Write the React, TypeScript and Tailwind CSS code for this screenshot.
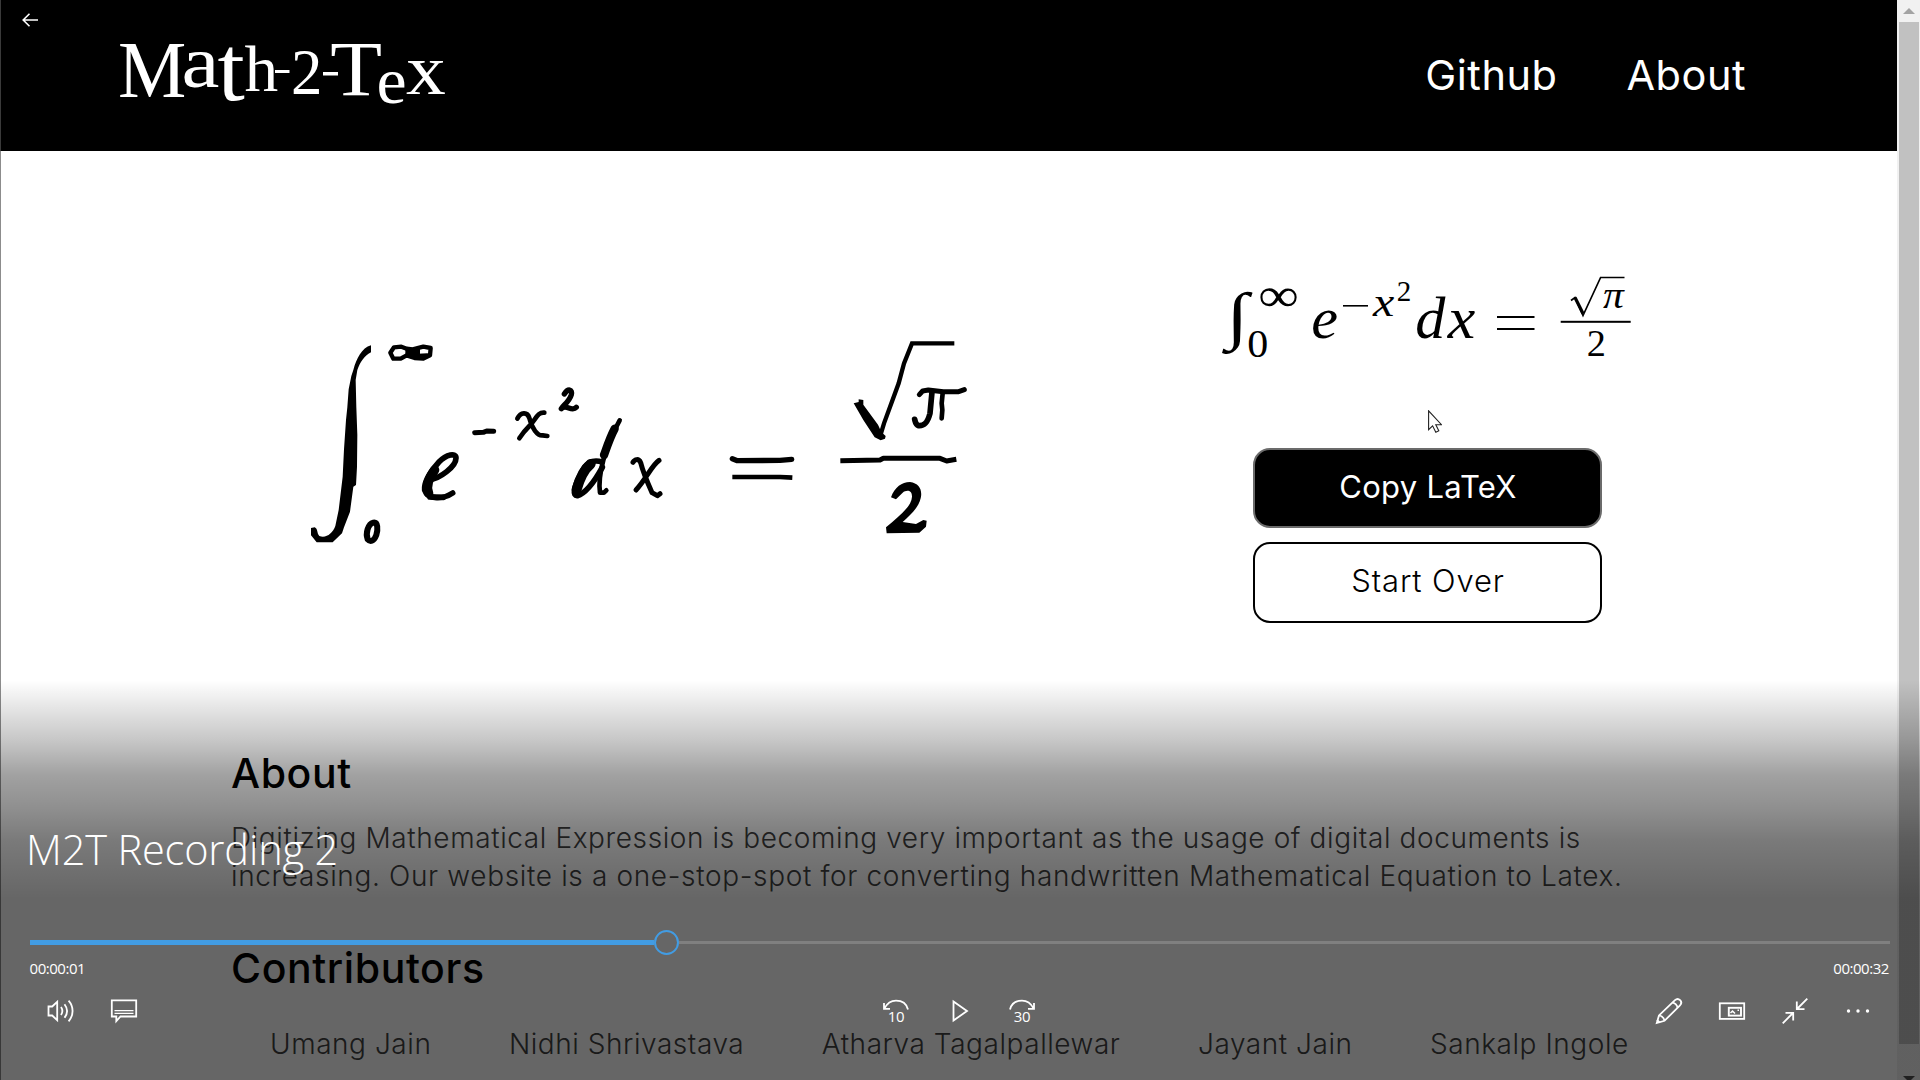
import React from "react";

type Metrics = { l: number; r: number; a: number; d: number; italic?: boolean };

// Ink boxes of Liberation Serif glyphs, in hundredths of an em.
const INK: Record<string, Metrics> = {
  M: { l: 2, r: 86, a: 65, d: 0 },
  a: { l: 3, r: 44, a: 47, d: 1 },
  t: { l: 0, r: 28, a: 57, d: 1 },
  h: { l: 0, r: 49, a: 68, d: 0 },
  "2": { l: 3, r: 46, a: 67, d: 0 },
  T: { l: 1, r: 60, a: 65, d: 0 },
  e: { l: 3, r: 42, a: 46, d: 1 },
  x: { l: 0, r: 49, a: 46, d: 0 },
  "0": { l: 3, r: 47, a: 67, d: 1 },
  "∞": { l: 3, r: 68, a: 48, d: -9 },
  "∫": { l: -6, r: 33, a: 72, d: 27 },
  "e*": { l: 3, r: 42, a: 46, d: 1, italic: true },
  "x*": { l: -2, r: 44, a: 45, d: 1, italic: true },
  "d*": { l: 2, r: 51, a: 68, d: 1, italic: true },
  "π*": { l: 0, r: 53, a: 45, d: 1, italic: true },
};

// Places one character so that its ink fills the given box.
function Glyph({ c, x0, x1, y0, y1 }: { c: string; x0: number; x1: number; y0: number; y1: number }) {
  const m = INK[c];
  const sx = (x1 - x0) / (m.r - m.l);
  const sy = (y1 - y0) / (m.a + m.d);
  return (
    <text
      fontSize="100"
      fontStyle={m.italic ? "italic" : "normal"}
      transform={`translate(${x0 - m.l * sx} ${y0 + m.a * sy}) scale(${sx} ${sy})`}
    >
      {c[0]}
    </text>
  );
}

function Logo() {
  return (
    <svg viewBox="119 36 328 76" className="h-[76px] w-[328px] overflow-visible fill-white font-['Liberation_Serif',serif]">
      <Glyph c="M" x0={119.5} x1={184} y0={45} y1={97} />
      <Glyph c="a" x0={184} x1={219} y0={53} y1={88} />
      <Glyph c="t" x0={217.5} x1={245} y0={47} y1={101} />
      <Glyph c="h" x0={244.5} x1={277.5} y0={46} y1={91} />
      <rect x="275" y="70" width="14.5" height="3" />
      <Glyph c="2" x0={293} x1={320} y0={50} y1={94} />
      <rect x="323" y="72" width="15" height="3.5" />
      <Glyph c="T" x0={331} x1={381} y0={43.5} y1={95} />
      <Glyph c="e" x0={378.5} x1={405} y0={73} y1={104} />
      <Glyph c="x" x0={406} x1={445} y0={61} y1={94} />
    </svg>
  );
}

function Handwriting() {
  return (
    <svg
      viewBox="0 0 2130 720"
      className="h-[240px] w-[710px]"
      fill="none"
      stroke="#000"
      strokeWidth="17"
      strokeLinecap="round"
      strokeLinejoin="round"
    >
      <path
        fill="#000"
        stroke="none"
        d="M243 76 C215 84 200 115 190 150 L184 168 L176 208 L172 262 L168 300 L162 388 L158 470 L146 570 L136 618 C128 640 108 656 88 648 C80 640 84 626 74 622 L63 624 L63 646 L80 667 L128 667 L156 640 L162 622 L180 575 L190 500 L198 495 L201 440 L202 345 L199 262 L197 180 L202 150 C210 128 222 108 243 97 Z"
      />
      <path strokeWidth="13" d="M334 80 L312 82 L301 98 L310 116 L332 116 L350 106 L374 114 L400 116 L420 106 L422 84 L400 80 L368 88 L350 86 Z" />
      <path strokeWidth="26" strokeLinecap="butt" d="M346 98 L390 98" />
      <path strokeWidth="12" d="M370 108 L412 106" />
      <path strokeWidth="18" d="M250 608 C264 606 264 628 259 645 C251 666 240 666 233 658 C226 640 234 612 250 608 Z" />
      <path d="M418 480 C450 475 498 440 498 414 C498 398 470 402 446 427 C415 462 402 490 404 510 C414 540 460 538 488 519" />
      <path strokeWidth="28" d="M434 450 C412 480 408 500 416 520" />
      <path strokeWidth="17" d="M420 531 L460 532" />
      <path strokeWidth="15" d="M554 338 L580 337 L590 333 L611 334" />
      <path strokeWidth="14" d="M682 296 C692 276 712 274 718 294 C726 325 742 348 758 346 L772 348 M763 278 C742 276 738 298 718 318 C702 334 695 344 688 355" />
      <path strokeWidth="16" d="M823 222 C834 204 848 208 844 224 C838 244 820 256 814 266 C828 250 845 278 859 262" />
      <path strokeWidth="14" d="M989 301 C970 335 950 385 940 420 C932 450 925 485 930 518 L942 518 L949 511" />
      <path strokeWidth="25" d="M974 326 C960 352 951 380 942 405" />
      <path d="M936 426 C905 416 887 430 870 467 C850 505 848 528 862 527 C890 519 916 480 937 442" />
      <path strokeWidth="30" d="M902 432 C882 448 868 480 860 508" />
      <path strokeWidth="15" d="M1029 427 C1034 418 1046 414 1052 428 C1060 460 1078 500 1086 518 L1102 527 L1110 521 M1107 421 C1085 436 1070 475 1038 510" />
      <g transform="translate(1170 0)">
        <path strokeWidth="16" d="M157 416 L172 422 L300 421 L335 418" />
        <path strokeWidth="14" strokeLinecap="butt" d="M157 471 L300 471 L337 473" />
        <path fill="#000" stroke="none" d="M521 250 L536 246 L536 238 L550 240 L550 254 L594 314 L604 336 L617 348 L615 356 L602 361 L584 352 L550 300 Z" />
        <path strokeWidth="13" strokeLinejoin="miter" strokeLinecap="butt" d="M600 350 L612 310 L656 190 L672 130 L696 70 L823 70" />
        <path d="M718 224 L728 213 L745 210 L790 215 L836 215 L853 209" strokeWidth="15" />
        <path d="M756 216 L750 280 C742 312 730 318 716 317 C706 314 706 305 704 298" />
        <path strokeWidth="14" d="M788 220 L785 250 L787 270 L785 295" />
        <path strokeWidth="15" strokeLinecap="butt" d="M481 422 L600 420 L610 415 L780 415 L800 423 L829 418" />
        <path fill="#000" stroke="none" d="M633 532 C645 500 665 487 690 486 C718 490 728 510 722 535 C715 565 690 585 668 606 L708 612 L730 600 L740 602 L738 620 L718 638 L620 640 L618 622 C655 590 695 560 696 530 C696 508 678 510 668 518 L648 538 Z" />
      </g>
    </svg>
  );
}

function Formula() {
  return (
    <svg viewBox="1217 273 418 90" className="h-[90px] w-[418px] overflow-visible font-['Liberation_Serif',serif]">
      <Glyph c="∫" x0={1221.5} x1={1253} y0={291} y1={354} />
      <Glyph c="∞" x0={1260} x1={1297} y0={288} y1={306.5} />
      <Glyph c="0" x0={1248.5} x1={1267} y0={330} y1={357} />
      <Glyph c="e*" x0={1313} x1={1336.5} y0={311} y1={338.5} />
      <rect x="1343" y="305" width="25" height="1.6" />
      <Glyph c="x*" x0={1372} x1={1394} y0={297} y1={316.5} />
      <Glyph c="2" x0={1397.5} x1={1410} y0={281} y1={301} />
      <Glyph c="d*" x0={1416.5} x1={1446} y0={298} y1={338.5} />
      <Glyph c="x*" x0={1446.5} x1={1475} y0={311.5} y1={338.5} />
      <rect x="1497" y="316" width="37.5" height="2" />
      <rect x="1497" y="328" width="37.5" height="2" />
      <rect x="1560.7" y="320.8" width="70" height="2" />
      <path d="M1571 300.500l4-3 8 18 17.600-38H1624.500" fill="none" stroke="#000" strokeWidth="1.700" />
      <path d="M1575 297.500l8 16" stroke="#000" strokeWidth="3.200" />
      <Glyph c="π*" x0={1603} x1={1625} y0={291} y1={308.5} />
      <Glyph c="2" x0={1588} x1={1604.500} y0={330} y1={355.5} />
    </svg>
  );
}

const contributors = ["Umang Jain", "Nidhi Shrivastava", "Atharva Tagalpallewar", "Jayant Jain", "Sankalp Ingole"];

function Page() {
  return (
    <div className="flex h-full flex-1 flex-col overflow-hidden bg-white font-[Inter,sans-serif] text-black">
      <header className="flex h-[151px] shrink-0 items-center justify-between bg-black pr-[151px] pb-[3px] pl-[118px]">
        <Logo />
        <nav className="flex gap-[69px] pt-[3px] text-[41.5px] leading-none tracking-[0.5px] text-white">
          <a>Github</a>
          <a>About</a>
        </nav>
      </header>
      <main className="flex h-[529px] shrink-0 pl-[289px]">
        <div className="pt-[169px]">
          <Handwriting />
        </div>
        <div className="ml-[217px] flex flex-col items-center pt-[122px]">
          <Formula />
          <div className="mt-[84.500px] flex flex-col gap-[14px] pl-[2px]">
            <button className="h-[80.500px] w-[349px] rounded-[17px] border-2 border-[#6b6b6b] bg-black pb-[2px] pl-[2px] text-[31px] tracking-[0.3px] text-white">
              Copy LaTeX
            </button>
            <button className="h-[81px] w-[349px] rounded-[17px] border-2 border-black bg-white pb-[2px] pl-[2px] text-[31px] font-light tracking-[0.850px] text-black">
              Start Over
            </button>
          </div>
        </div>
      </main>
      <section className="flex flex-col px-[230px] pt-[68px] whitespace-nowrap">
        <h2 className="text-[41px] leading-[50px] font-medium tracking-[0.6px]">About</h2>
        <p className="mt-[21px] text-[28px] leading-[38px] font-light text-[#404040]">
          <span className="block tracking-[0.600px]">
            Digitizing Mathematical Expression is becoming very important as the usage of digital documents is
          </span>
          <span className="block tracking-[0.650px]">
            increasing. Our website is a one-stop-spot for converting handwritten Mathematical Equation to Latex.
          </span>
        </p>
        <h2 className="mt-[48px] text-[41px] leading-[50px] font-medium tracking-[0.6px]">Contributors</h2>
        <ul className="mt-8 flex gap-[77.500px] pl-[39px] text-[28px] leading-[38px] font-light tracking-[0.550px] text-[#404040]">
          {contributors.map((name) => (
            <li key={name}>{name}</li>
          ))}
        </ul>
      </section>
    </div>
  );
}

function Scrollbar() {
  return (
    <div className="flex h-full w-[23px] flex-col items-center overflow-hidden bg-[#f1f1f1] pl-px">
      <svg viewBox="0 0 12 6" className="mt-2 h-[6px] w-3 shrink-0 fill-[#a3a3a3]">
        <path d="M0 6l6-6 6 6z" />
      </svg>
      <div className="mt-2 h-[1022px] w-5 shrink-0 bg-[#c1c1c1]" />
      <svg viewBox="0 0 12 6" className="mt-[32px] h-[6px] w-3 shrink-0 fill-[#505050]">
        <path d="M0 0l6 6 6-6z" />
      </svg>
    </div>
  );
}

function IconSlot({ children, label }: { children: React.ReactNode; label: string }) {
  return (
    <button aria-label={label} className="flex h-12 w-[63px] items-center justify-center">
      <svg viewBox="0 0 32 32" className="h-8 w-8 overflow-visible" fill="none" stroke="#fff" strokeWidth="1.800">
        {children}
      </svg>
    </button>
  );
}

function SkipText({ children }: { children: string }) {
  return (
    <text x="16" y="27" textAnchor="middle" fontSize="15" fill="#fff" stroke="none" className="font-['Open_Sans',sans-serif]" letterSpacing="-0.4">
      {children}
    </text>
  );
}

function Player() {
  return (
    <div className="absolute inset-0 flex flex-col justify-between text-white">
      <button aria-label="Back" className="ml-[22px] h-10 w-4">
        <svg viewBox="0 0 16 14" className="h-[14px] w-4" fill="none" stroke="#fff" strokeWidth="1.600">
          <path d="M16 7H1M7.500 .8L1.200 7l6.300 6.200" />
        </svg>
      </button>
      <div className="flex h-[400px] flex-col bg-[linear-gradient(to_bottom,rgba(0,0,0,0)_0px,rgba(0,0,0,0.22)_60px,rgba(0,0,0,0.37)_95px,rgba(0,0,0,0.44)_128px,rgba(0,0,0,0.52)_160px,rgba(0,0,0,0.6)_218px)]">
        <div className="mt-[140px] h-[58px] pl-[26px] font-['Open_Sans',sans-serif] text-[41.500px] leading-[58px] font-light tracking-[-0.150px]">
          M2T Recording 2
        </div>
        <div className="mx-[30px] mt-[51.500px] flex h-[25px] items-center">
          <div className="h-[5px] w-[624px] bg-[#429ce3]" />
          <div className="h-[25px] w-[25px] rounded-full border-2 border-[#429ce3] bg-[#666]" />
          <div className="h-[3px] flex-1 bg-[#808080]" />
        </div>
        <div className="mr-[31px] ml-[29.500px] mt-[3px] flex h-[20px] justify-between font-['Open_Sans',sans-serif] text-[15px] leading-[20px] tracking-[-0.450px]">
          <span>00:00:01</span>
          <span>00:00:32</span>
        </div>
        <div className="mt-[9.500px] flex items-center justify-between pr-[31px] pl-[29.500px]">
          <div className="flex w-[189px]">
            <IconSlot label="Volume">
              <path d="M3.500 11.500h3.700l5-4.700v18.400l-5-4.700H3.500z" />
              <path d="M16 12c1.800 2.600 1.800 5.400 0 8M19.500 9.200c3.200 4.200 3.200 9.400 0 13.600M23.600 5.700c5.300 6.200 5.300 14.400 0 20.600" />
            </IconSlot>
            <IconSlot label="Subtitles">
              <path d="M3.800 5.300h24.400v16.200H12.500l-4.200 4.700v-4.700H3.800z" />
              <path d="M6.500 15.600h19M6.500 18.400h19" strokeWidth="1.300" />
            </IconSlot>
          </div>
          <div className="flex">
            <IconSlot label="Skip back 10 seconds">
              <path d="M4 8v5.800h6M4.400 13.500C7 8.500 11 5.600 16 5.600c6.200 0 10.600 3.500 12 8.800" />
              <SkipText>10</SkipText>
            </IconSlot>
            <IconSlot label="Play">
              <path d="M10.500 6.500v19L24 16z" />
            </IconSlot>
            <IconSlot label="Skip forward 30 seconds">
              <path d="M28 8v5.800h-6M27.600 13.500C25 8.500 21 5.600 16 5.600c-6.200 0-10.600 3.500-12 8.800" />
              <SkipText>30</SkipText>
            </IconSlot>
          </div>
          <div className="-ml-[63px] flex">
            <IconSlot label="Edit">
              <path d="M3.800 28l2.200-7.600L22 5.200c1.600-1.500 3.800-1.300 5.100 0 1.400 1.400 1.400 3.600-.1 5.100L11.500 25.800z" />
              <path d="M19.500 7.600c2.500.5 4.600 2.600 5.100 5.100M6 20.400c2.800.4 4.900 2.600 5.500 5.400M4 25l3 2.600" />
            </IconSlot>
            <IconSlot label="Mini view">
              <rect x="3.800" y="8.300" width="24.400" height="15.600" />
              <rect x="12.800" y="12.800" width="12.200" height="7.800" strokeWidth="1.900" />
              <path d="M14.500 18l2-2 2.500 2.500M21.500 15.300h1.500" strokeWidth="1.500" />
            </IconSlot>
            <IconSlot label="Exit full screen">
              <path d="M28.300 3.700L18 14M17.800 6.500v7.700h7.700M3.700 28.300L14 18M14.200 25.500v-7.700H6.500" />
            </IconSlot>
            <IconSlot label="More">
              <g fill="#fff" stroke="none">
                <circle cx="6.500" cy="16" r="1.700" />
                <circle cx="16" cy="16" r="1.700" />
                <circle cx="25.500" cy="16" r="1.700" />
              </g>
            </IconSlot>
          </div>
        </div>
      </div>
    </div>
  );
}

export default function App() {
  return (
    <div className="relative flex h-[1080px] w-[1920px] overflow-hidden bg-white">
      <div className="flex h-full w-px flex-col">
        <div className="h-[151px] bg-[#3a3a3a]" />
        <div className="flex-1 bg-[#8c8c8c]" />
      </div>
      <Page />
      <Scrollbar />
      <svg viewBox="0 0 14 23" className="absolute top-[410px] left-[1428px] h-[23px] w-[14px]">
        <path d="M.6.800v18.800l4-3.800 3.200 6.400 3-1.500-3-6h5.700z" fill="#fff" stroke="#222" strokeWidth="1.100" />
      </svg>
      <Player />
    </div>
  );
}
